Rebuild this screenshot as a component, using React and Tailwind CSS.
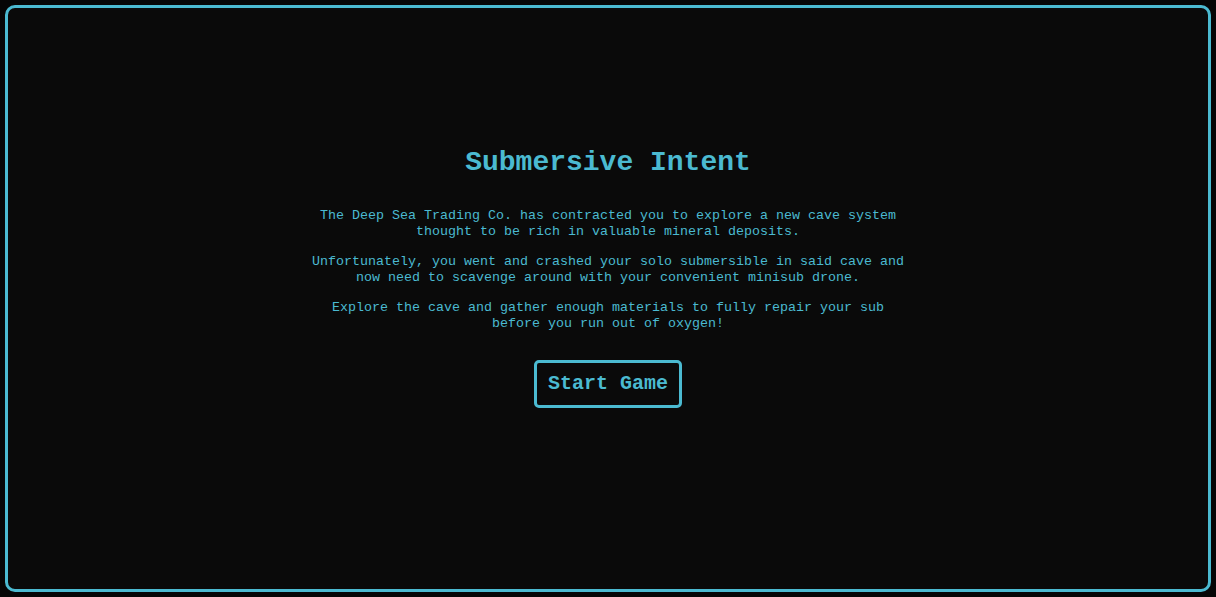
import React from "react";

const paragraphs = [
  "The Deep Sea Trading Co. has contracted you to explore a new cave system thought to be rich in valuable mineral deposits.",
  "Unfortunately, you went and crashed your solo submersible in said cave and now need to scavenge around with your convenient minisub drone.",
  "Explore the cave and gather enough materials to fully repair your sub before you run out of oxygen!",
];

const App = () => {
  return (
    <div className="h-[597px] w-full bg-[#060606] p-[5px] font-['Liberation_Mono','Courier_New',monospace] text-[#4bbad1]">
      <div className="flex h-full w-full flex-col items-center justify-center rounded-[10px] border-[3px] border-[#4bbad1] bg-[#0a0a0a] pb-[42px]">
        <h1 className="text-[28px] font-bold leading-[32px]">Submersive Intent</h1>
        <div className="mt-[29px] flex w-[600px] flex-col gap-[14px] text-center text-[13.33px] leading-[16px]">
          {paragraphs.map((p, i) => (
            <p key={i}>{p}</p>
          ))}
        </div>
        <button className="mt-[28px] rounded-[5px] border-[3px] border-[#4bbad1] px-[11px] py-[9px] text-[20px] font-bold leading-[24px]">
          Start Game
        </button>
      </div>
    </div>
  );
};

export default App;
